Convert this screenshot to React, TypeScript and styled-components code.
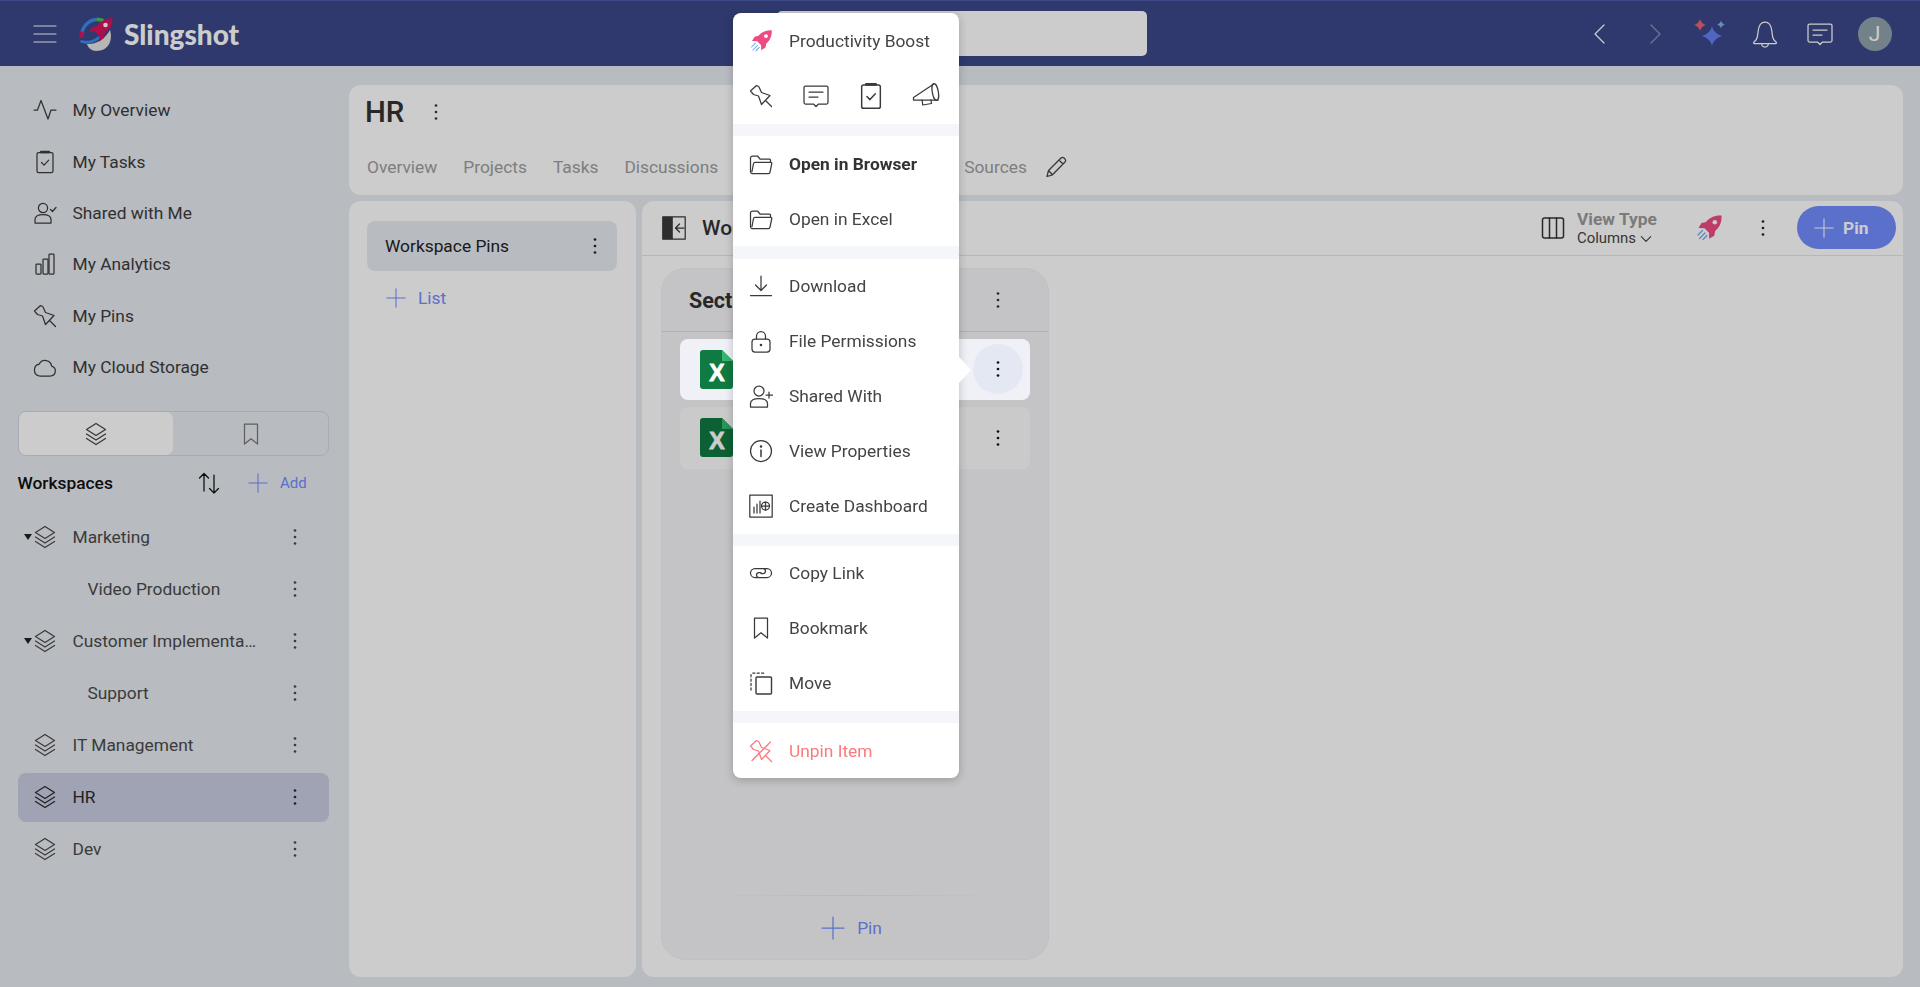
import React from "react";
import styled, { createGlobalStyle } from "styled-components";

const Global = createGlobalStyle`
  html, body { margin: 0; height: 100%; overflow: hidden; }
  body { font-family: Roboto, "Liberation Sans", sans-serif; color: #3a3a3a; background: #e7eaf1; }
  * { box-sizing: border-box; }
`;

const Glyph = styled.svg<{ $size?: number; $w?: number }>`
  width: ${(p) => p.$w ?? p.$size ?? 24}px;
  height: ${(p) => p.$size ?? 24}px;
  flex: none;
  fill: none;
  stroke: currentColor;
  stroke-width: 1.25;
  stroke-linecap: round;
  stroke-linejoin: round;
  display: block;
`;

type IP = { size?: number };
const I = ({ size = 24, w, vb = "0 0 24 24", children }: { size?: number; w?: number; vb?: string; children: React.ReactNode }) => (
  <Glyph $size={size} $w={w} viewBox={vb}>{children}</Glyph>
);

const PIN_D = "M1.500 7L7.500 1.500Q9 1.500 10 3L12.500 8.500 21 11.500 12.500 20.500 9.500 12 4.500 10.500ZM16.500 16.500L22.500 22.500";
const Burger = () => <I><path d="M1 4h22M1 12h22M1 20h22" strokeWidth="1" /></I>;
const Pulse = () => <I><path d="M1 12h3.500L8 2.500 15 21l3-9h5" /></I>;
const Clipboard = ({ size }: IP) => (
  <I size={size}>
    <rect x="4" y="2.500" width="16" height="20" rx="1.600" />
    <path d="M8 2h8" strokeWidth="2.400" />
    <path d="M8.500 12.500l2.600 2.600 4.600-5" />
  </I>
);
const SharedMe = () => <I><circle cx="10" cy="7" r="4.600" /><path d="M2 22v-3.500C2 15 5 13.500 10 13.500s8 1.500 8 5V22zM17.500 8.500l2 2 3.500-4" /></I>;
const Analytics = () => <I><rect x="3" y="12" width="5" height="10" rx=".8" /><rect x="10" y="7" width="5" height="15" rx=".8" /><rect x="16" y="2" width="5" height="20" rx=".8" /></I>;
const PinIcon = ({ size }: IP) => <I size={size}><path d={PIN_D} /></I>;
const Cloud = () => <I><path d="M6.500 21h11a5 5 0 0 0 1.200-9.800 6.600 6.600 0 0 0-12.500-2A6 6 0 0 0 6.500 21z" /></I>;
const Layers = () => <I><path d="M12 1.500l9.500 6-9.500 6-9.500-6zM2.500 12l9.500 6 9.500-6M2.500 16.500l9.500 6 9.500-6" /></I>;
const BookmarkIcon = () => <I><path d="M5.500 2h13v20l-6.500-5.200L5.500 22z" /></I>;
const Sort = () => <I><path d="M7 20V2.500M2.500 7L7 2.500 11.500 7M17 4v18M12.500 17.500L17 22l4.500-4.500" /></I>;
const Plus = ({ size = 20 }: IP) => <I size={size}><path d="M12 1v22M1 12h22" /></I>;
const DotsBox = styled.svg`width: 24px; height: 24px; flex: none; fill: currentColor; display: block;`;
const Dots = () => (
  <DotsBox viewBox="0 0 24 24"><circle cx="12" cy="5.500" r="1.350" /><circle cx="12" cy="12" r="1.350" /><circle cx="12" cy="18.500" r="1.350" /></DotsBox>
);
const Chat = ({ size = 28 }: IP) => <I size={size} vb="0 0 28 28"><path d="M3.500 4h21a1.500 1.500 0 0 1 1.500 1.500v15a1.500 1.500 0 0 1-1.500 1.500H16.500L14 24.500 11.500 22h-8A1.500 1.500 0 0 1 2 20.500v-15A1.500 1.500 0 0 1 3.500 4zM7 10h14M7 15h9" /></I>;
const Megaphone = () => <I size={28} vb="0 0 28 28"><path d="M21.800 2L1.500 15.500V18H26" /><ellipse cx="23.300" cy="10" rx="3" ry="8.500" transform="rotate(-10 23.300 10)" /><path d="M10 18l.8 5 8.700-1.500-.6-3.500" /></I>;
const Folder = () => <I><path d="M1.500 19.500V6a2 2 0 0 1 2-2h5l2.500 3h9.500a1 1 0 0 1 1 1v2M3 21.500h16.500a1.500 1.500 0 0 0 1.500-1.300l1.800-8.700a1 1 0 0 0-1-1.200H6a1.500 1.500 0 0 0-1.500 1.200L3 19.500" /><path d="M1.500 19.500A2 2 0 0 0 3 21.500" /></I>;
const Download = () => <I><path d="M12 2v14M6.500 11l5.500 5.500 5.500-5.500M1.500 21.500h21" /></I>;
const Lock = () => <I><rect x="3" y="10" width="18" height="13" rx="3" /><path d="M7.500 10V7a4.500 4.500 0 0 1 9 0v3" /><circle cx="12" cy="16" r=".7" fill="currentColor" /></I>;
const UserPlus = () => <I><circle cx="10" cy="7" r="5" /><path d="M1.500 23v-3.500C1.500 16 5 14.500 10 14.500s8.500 1.500 8.500 5V23zM20 8v6M17 11h6.500" /></I>;
const Info = () => <I><circle cx="12" cy="12" r="10.500" /><path d="M12 11v6.500" strokeWidth="1.500" /><circle cx="12" cy="7.500" r=".7" fill="currentColor" /></I>;
const CreateDash = () => <I><rect x=".8" y="1" width="22.400" height="22" /><path d="M5 13v6M8 10v9M11 7v12" /><circle cx="16.500" cy="12" r="4" /><path d="M16.500 8v8M12.500 12h8" /></I>;
const LinkIcon = () => <I><path d="M10 16.500H6a4.500 4.500 0 0 1 0-9h8a2.500 2.500 0 0 1 0 5h-2M14 7.500h4a4.500 4.500 0 0 1 0 9h-8a2.500 2.500 0 0 1 0-5h2" /></I>;
const Move = () => <I><path d="M2 19V4a2 2 0 0 1 2-2h11" strokeDasharray="2.200 2.200" /><rect x="7" y="6" width="15.500" height="17" rx="1" strokeWidth="1.400" /></I>;
const Unpin = () => <I><path d={PIN_D} /><path d="M3 21.500L21.500 3" /></I>;
const Rocket = ({ size = 24 }: IP) => (
  <Glyph $size={size} viewBox="0 0 28 28" style={{ stroke: "none" }}>
    <path fill="#ed4b82" d="M26.500 1.500C20 1 14.500 3.500 11 8L6.500 9 3.500 14l6 .2 4.500 4.500.2 6 5-3 1-4.700C24.500 13.500 27 8 26.500 1.500z" />
    <circle cx="19.800" cy="8.300" r="2.300" fill="#fff" />
    <path stroke="#6ea6f2" strokeWidth="1.200" strokeLinecap="round" d="M7.500 16.500L3 21M10 19l-5.500 5.500M12 21.500l-4 4" />
  </Glyph>
);
const Back = () => <I><path d="M16 3L7 12l9 9" /></I>;
const Forward = () => <I><path d="M8 3l9 9-9 9" /></I>;
const Bell = () => <I size={30} vb="0 0 30 30"><path d="M4 23c2.500-1.500 3-3 3.500-6l.8-6C9 6 11.500 3 15 3s6 3 6.700 8l.8 6c.5 3 1 4.500 3.500 6 .8.600.4 1.500-.5 1.500H4.500C3.600 24.500 3.200 23.600 4 23zM11.500 24.500c.3 2.200 1.700 3.500 3.500 3.500s3.200-1.300 3.500-3.500" /></I>;
const Sparkles = () => (
  <Glyph $size={34} viewBox="0 0 34 34" style={{ stroke: "none" }}>
    <path fill="#6480f0" d="M19 9c1 5 5 8.500 10 10-5 1.500-9 5-10 10-1-5-5-8.500-10-10 5-1.500 9-5 10-10z" />
    <path fill="#ed6170" d="M7 2c.6 3 3 5.200 6 6-3 .8-5.400 3-6 6-.6-3-3-5.200-6-6 3-.8 5.400-3 6-6z" />
    <path fill="#7fb3ea" d="M28 3.500c.4 2 2 3.500 4 4-2 .5-3.600 2-4 4-.4-2-2-3.500-4-4 2-.5 3.600-2 4-4z" />
  </Glyph>
);
const Logo = () => (
  <Glyph $size={34} viewBox="0 0 34 34" style={{ strokeLinecap: "butt" }}>
    <path stroke="none" fill="#e4e4e4" d="M8 27c9 1 18-5 23-14 3 10-1 21-14 21-4 0-8-3-9-7z" />
    <path stroke="#3d8bf0" strokeWidth="3.400" d="M2.500 21C1.800 11 9 3 17.500 2.500" />
    <path stroke="#49c35b" strokeWidth="3.400" d="M17.500 2.500c2.500-.2 5 .2 7 1.200" />
    <path stroke="#d6155d" strokeWidth="3.400" d="M2.300 14.500l.1 6.500" />
    <path stroke="#3d8bf0" strokeWidth="3" d="M1.500 24c6 2.800 14 1 19-4" />
    <path stroke="none" fill="#d6155d" d="M33.500 1C27 1.500 22 3.500 18 9l-5 1.500-3 4.500 6-.5 4 4 .2 6 4.800-3.500 1-5C31 12 33.800 8 33.500 1z" />
    <circle stroke="none" cx="26.500" cy="8" r="2.300" fill="#fff" />
  </Glyph>
);
const ColumnsIcon = () => <I><rect x="1.500" y="2" width="21" height="20" rx="2" strokeWidth="1.500" /><path d="M8.500 2v20M15.500 2v20" strokeWidth="1.500" /></I>;
const Caret = () => <I size={14}><path d="M4 8l8 8 8-8" strokeWidth="2" /></I>;
const Pencil = () => <I><path d="M3 21.500l1.500-6L17 3a2.200 2.200 0 0 1 3 0l1 1a2.200 2.200 0 0 1 0 3L8.500 19.800zM4.500 15.500l4 4.300M15 5l4 4" /></I>;
const PanelToggle = () => (
  <Glyph $size={24} viewBox="0 0 24 24">
    <rect x=".8" y=".8" width="22.400" height="22.400" />
    <rect x=".8" y=".8" width="10" height="22.400" fill="currentColor" stroke="none" />
    <path d="M22 12H14M17.500 8L13.500 12l4 4" />
  </Glyph>
);
const ExcelBox = styled.svg`width: 33px; height: 39px; flex: none; display: block;`;
const Excel = () => (
  <ExcelBox viewBox="0 0 33 39">
    <path fill="#0f7a41" d="M3 0h19l11 11v25a3 3 0 0 1-3 3H3a3 3 0 0 1-3-3V3a3 3 0 0 1 3-3z" />
    <path fill="#35b86e" d="M22 0l11 11H22z" />
    <text x="17" y="31" textAnchor="middle" fontFamily="Liberation Sans, sans-serif" fontWeight="700" fontSize="23" stroke="#fff" strokeWidth=".8" fill="#fff">X</text>
  </ExcelBox>
);

/* ---------- shell ---------- */
const Page = styled.div`
  position: relative;
  height: 100vh;
  display: grid;
  grid-template-rows: 66px 1fr;
  overflow: hidden;
`;
const Backdrop = styled.div`
  position: fixed;
  inset: 0;
  background: rgba(0, 0, 0, 0.2);
  z-index: 10;
`;
const Header = styled.header`
  background: #3b4889;
  border-top: 1px solid #4c5ca8;
  color: #fff;
  display: flex;
  align-items: center;
  padding-left: 33px;
  padding-right: 18px;
`;
const Wordmark = styled.span`
  font-family: Lato, Roboto, sans-serif;
  font-weight: 900;
  font-size: 28px;
  margin-left: 11px;
  width: 118px;
`;
const LogoSlot = styled.span`margin-left: 22px;`;
const Search = styled.div`
  width: 370px;
  height: 45px;
  margin-left: 535px;
  background: #fff;
  border-radius: 5px;
`;
const HeadRight = styled.div`
  margin-left: auto;
  display: grid;
  grid-template-columns: repeat(6, 55px);
  justify-items: center;
  align-items: center;
`;
const Dim = styled.span`opacity: 0.4; display: block;`;
const Avatar = styled.div`
  width: 34px;
  height: 34px;
  border-radius: 50%;
  background: #90a3aa;
  color: #fff;
  display: flex;
  align-items: center;
  justify-content: center;
  font-size: 21px;
`;
const Body = styled.div`
  display: grid;
  grid-template-columns: 349px 1fr;
  min-height: 0;
`;

/* ---------- sidebar ---------- */
const Side = styled.aside`
  padding-top: 18.500px;
  display: flex;
  flex-direction: column;
`;
const NavRow = styled.div`
  height: 51.400px;
  padding-left: 33px;
  display: flex;
  align-items: center;
  gap: 15.500px;
  font-size: 17.350px;
  color: #3d3d3d;
`;
const Toggle = styled.div`
  margin: 18.500px 20px 0 17.500px;
  height: 45px;
  display: grid;
  grid-template-columns: 1fr 1fr;
  border: 1px solid #d3d6de;
  border-radius: 8px;
`;
const ToggleCell = styled.div<{ $on?: boolean }>`
  display: flex;
  align-items: center;
  justify-content: center;
  border-radius: 7px;
  background: ${(p) => (p.$on ? "#fff" : "transparent")};
  color: ${(p) => (p.$on ? "#444" : "#777")};
`;
const WsHead = styled.div`
  height: 54px;
  padding: 0 0 0 17.500px;
  display: flex;
  align-items: center;
  font-size: 17.350px;
  font-weight: 500;
  color: #111;
`;
const WsTitle = styled.span`width: 179.500px;`;
const AddBtn = styled.span`
  margin-left: 27px;
  display: flex;
  align-items: center;
  gap: 12px;
  color: #728cfe;
  font-size: 15px;
  font-weight: 400;
`;
const Tree = styled.div`
  margin: 2px 20px 0 17.500px;
  display: flex;
  flex-direction: column;
  gap: 3.100px;
`;
const TreeRow = styled.div<{ $on?: boolean }>`
  height: 49px;
  padding: 0 22.500px 0 5.500px;
  display: flex;
  align-items: center;
  border-radius: 8px;
  font-size: 17.350px;
  color: ${(p) => (p.$on ? "#2a2a2a" : "#4a4a4a")};
  background: ${(p) => (p.$on ? "#c8cce1" : "transparent")};
`;
const CaretSlot = styled.span`width: 10px; flex: none; display: flex; justify-content: center; color: #222;`;
const CaretTri = styled.span`
  width: 0;
  height: 0;
  border-left: 4.500px solid transparent;
  border-right: 4.500px solid transparent;
  border-top: 6px solid currentColor;
`;
const TreeLabel = styled.span<{ $sub?: boolean }>`
  flex: 1;
  min-width: 0;
  margin-left: ${(p) => (p.$sub ? "30.500px" : "15.500px")};
  margin-right: 24px;
  white-space: nowrap;
  overflow: hidden;
  text-overflow: ellipsis;
`;
const IconSpacer = styled.span`width: 24px; flex: none;`;

/* ---------- content ---------- */
const Content = styled.main`
  padding: 19px 17px 10px 0;
  display: grid;
  grid-template-rows: 110px 1fr;
  gap: 6px;
  min-height: 0;
`;
const TopCard = styled.section`
  background: #fff;
  border-radius: 12px;
  padding: 0 16px;
`;
const TitleRow = styled.div`
  height: 54px;
  display: flex;
  align-items: center;
  gap: 20px;
`;
const Title = styled.h1`
  margin: 0;
  font-size: 29.400px;
  font-weight: 500;
  color: #333;
`;
const Tabs = styled.nav`
  margin: 13px 0 0 2px;
  height: 30px;
  display: flex;
  align-items: center;
  gap: 26px;
  font-size: 17.350px;
  color: #9e9e9e;
`;
const Tab = styled.span<{ $skip?: number }>`
  margin-left: ${(p) => p.$skip ?? 0}px;
`;
const PencilSlot = styled.span`color: #444; margin-left: -9px;`;
const Panels = styled.div`
  display: grid;
  grid-template-columns: 287px 1fr;
  gap: 6px;
  min-height: 0;
`;
const ListPanel = styled.section`
  background: #fff;
  border-radius: 12px;
  padding: 20px 19px 0 18px;
`;
const ListItem = styled.div`
  height: 50px;
  padding: 0 10px 0 18px;
  background: #e7eaf1;
  border-radius: 8px;
  display: flex;
  align-items: center;
  justify-content: space-between;
  font-size: 17.350px;
  color: #222;
`;
const AddList = styled.div`
  height: 54px;
  padding-left: 19px;
  display: flex;
  align-items: center;
  gap: 12px;
  font-size: 17.350px;
  color: #728cfe;
`;
const MainPanel = styled.section`
  background: #fff;
  border-radius: 12px;
  display: flex;
  flex-direction: column;
  min-height: 0;
`;
const PanelHead = styled.div`
  height: 54.500px;
  flex: none;
  padding: 0 7px 0 20px;
  display: flex;
  align-items: center;
  border-bottom: 1px solid #e4e5e7;
`;
const PanelTitle = styled.span`
  margin-left: 16px;
  font-size: 21px;
  font-weight: 500;
  color: #333;
`;
const ViewGroup = styled.div`
  margin-left: auto;
  display: flex;
  align-items: center;
  gap: 12px;
  color: #333;
`;
const ViewStack = styled.div`
  display: flex;
  flex-direction: column;
  width: 86px;
  padding-top: 2px;
  line-height: 1.2;
`;
const ViewTitle = styled.span`
  font-size: 17.350px;
  font-weight: 700;
  color: #9a9a9a;
`;
const ViewValue = styled.span`
  font-size: 14.900px;
  color: #444;
  display: flex;
  align-items: center;
  gap: 3px;
`;
const RocketSlot = styled.span`margin-left: 32px;`;
const DotsSlot = styled.span`margin-left: 28px; color: #222;`;
const PinBtn = styled.button`
  margin-left: 22px;
  width: 99px;
  height: 43px;
  padding: 0 0 0 17px;
  border: 0;
  border-radius: 22px;
  background: #728cfe;
  color: #fff;
  font: 700 17.350px Roboto, sans-serif;
  display: flex;
  align-items: center;
  gap: 9px;
`;
const ColumnArea = styled.div`
  flex: 1;
  padding: 12.500px 0 17px 19px;
  min-height: 0;
  display: flex;
`;
const SectionCol = styled.div`
  width: 388px;
  background: #f5f6f9;
  border-radius: 24px;
  border: 1px solid #f0f1f4;
  display: flex;
  flex-direction: column;
`;
const SectionHead = styled.div`
  height: 63px;
  flex: none;
  padding: 0 38px 0 27px;
  display: flex;
  align-items: center;
  justify-content: space-between;
  border-bottom: 1px solid #dcdde0;
  font-size: 21.500px;
  font-weight: 700;
  color: #333;
`;
const PinList = styled.div`
  flex: 1;
  padding: 6.500px 18px 0;
  display: flex;
  flex-direction: column;
  gap: 7px;
`;
const PinCard = styled.div<{ $on?: boolean }>`
  height: ${(p) => (p.$on ? 61 : 62)}px;
  padding: 0 7px 0 20px;
  border-radius: 8px;
  display: flex;
  align-items: center;
  justify-content: space-between;
  background: ${(p) => (p.$on ? "#f0f1f7" : "#fdfdfe")};
  position: ${(p) => (p.$on ? "relative" : "static")};
  z-index: ${(p) => (p.$on ? 11 : "auto")};
`;
const RoundBtn = styled.span<{ $on?: boolean }>`
  width: 50px;
  height: 50px;
  border-radius: 50%;
  display: flex;
  align-items: center;
  justify-content: center;
  color: #111;
  background: ${(p) => (p.$on ? "#e4e8f3" : "transparent")};
`;
const SectionFoot = styled.div`
  height: 64px;
  flex: none;
  padding-right: 7px;
  display: flex;
  align-items: center;
  justify-content: center;
  gap: 12px;
  font-size: 17.350px;
  color: #728cfe;
  border-top: 1px solid;
  border-image: linear-gradient(90deg, transparent 10%, #e6e7ea 50%, transparent 90%) 1;
`;

/* ---------- popup ---------- */
const Menu = styled.div`
  position: absolute;
  left: 733px;
  top: 13px;
  width: 226px;
  background: #fff;
  border-radius: 8px;
  box-shadow: 0 2px 10px rgba(0, 0, 0, 0.22);
  z-index: 12;
  &::after {
    content: "";
    position: absolute;
    left: 100%;
    top: 344px;
    border-left: 12px solid #fff;
    border-top: 13px solid transparent;
    border-bottom: 13px solid transparent;
  }
`;
const MenuRow = styled.div<{ $bold?: boolean; $danger?: boolean }>`
  height: 55px;
  display: flex;
  align-items: center;
  font-size: 17.350px;
  font-weight: ${(p) => (p.$bold ? 700 : 400)};
  color: ${(p) => (p.$danger ? "#fb7a7c" : p.$bold ? "#333" : "#444")};
`;
const MenuIcon = styled.span<{ $danger?: boolean }>`
  width: 56px;
  flex: none;
  display: flex;
  justify-content: center;
  color: ${(p) => (p.$danger ? "#fb7a7c" : "#3a3a3a")};
`;
const IconRow = styled.div`
  height: 56px;
  display: grid;
  grid-template-columns: repeat(4, 55px);
  justify-items: center;
  align-items: center;
  color: #3a3a3a;
`;
const MenuSep = styled.div`
  height: 12.250px;
  background: #f4f6fa;
`;

const tree = [
  { name: "Marketing", caret: true },
  { name: "Video Production", sub: true },
  { name: "Customer Implementation", caret: true },
  { name: "Support", sub: true },
  { name: "IT Management" },
  { name: "HR", on: true },
  { name: "Dev" },
];
const nav: [React.ReactNode, string][] = [
  [<Pulse />, "My Overview"],
  [<Clipboard />, "My Tasks"],
  [<SharedMe />, "Shared with Me"],
  [<Analytics />, "My Analytics"],
  [<PinIcon />, "My Pins"],
  [<Cloud />, "My Cloud Storage"],
];
type Item = { icon: React.ReactNode; label: string; bold?: boolean; danger?: boolean };
const groups: Item[][] = [
  [
    { icon: <Folder />, label: "Open in Browser", bold: true },
    { icon: <Folder />, label: "Open in Excel" },
  ],
  [
    { icon: <Download />, label: "Download" },
    { icon: <Lock />, label: "File Permissions" },
    { icon: <UserPlus />, label: "Shared With" },
    { icon: <Info />, label: "View Properties" },
    { icon: <CreateDash />, label: "Create Dashboard" },
  ],
  [
    { icon: <LinkIcon />, label: "Copy Link" },
    { icon: <BookmarkIcon />, label: "Bookmark" },
    { icon: <Move />, label: "Move" },
  ],
  [{ icon: <Unpin />, label: "Unpin Item", danger: true }],
];

export default function App() {
  return (
    <Page>
      <Global />
      <Header>
        <Burger />
        <LogoSlot><Logo /></LogoSlot>
        <Wordmark>Slingshot</Wordmark>
        <Search />
        <HeadRight>
          <Back />
          <Dim><Forward /></Dim>
          <Sparkles />
          <Bell />
          <Chat />
          <Avatar>J</Avatar>
        </HeadRight>
      </Header>
      <Body>
        <Side>
          {nav.map(([icon, label]) => (
            <NavRow key={label}>{icon}{label}</NavRow>
          ))}
          <Toggle>
            <ToggleCell $on><Layers /></ToggleCell>
            <ToggleCell><BookmarkIcon /></ToggleCell>
          </Toggle>
          <WsHead>
            <WsTitle>Workspaces</WsTitle>
            <Sort />
            <AddBtn><Plus />Add</AddBtn>
          </WsHead>
          <Tree>
            {tree.map((t) => (
              <TreeRow key={t.name} $on={t.on}>
                <CaretSlot>{t.caret && <CaretTri />}</CaretSlot>
                {t.sub ? <IconSpacer /> : <Layers />}
                <TreeLabel $sub={t.sub}>{t.name}</TreeLabel>
                <Dots />
              </TreeRow>
            ))}
          </Tree>
        </Side>
        <Content>
          <TopCard>
            <TitleRow>
              <Title>HR</Title>
              <Dots />
            </TitleRow>
            <Tabs>
              <Tab>Overview</Tab>
              <Tab>Projects</Tab>
              <Tab>Tasks</Tab>
              <Tab>Discussions</Tab>
              <Tab $skip={220}>Sources</Tab>
              <PencilSlot><Pencil /></PencilSlot>
            </Tabs>
          </TopCard>
          <Panels>
            <ListPanel>
              <ListItem>Workspace Pins<Dots /></ListItem>
              <AddList><Plus />List</AddList>
            </ListPanel>
            <MainPanel>
              <PanelHead>
                <PanelToggle />
                <PanelTitle>Workspace Pins</PanelTitle>
                <ViewGroup>
                  <ColumnsIcon />
                  <ViewStack>
                    <ViewTitle>View Type</ViewTitle>
                    <ViewValue>Columns<Caret /></ViewValue>
                  </ViewStack>
                </ViewGroup>
                <RocketSlot><Rocket size={28} /></RocketSlot>
                <DotsSlot><Dots /></DotsSlot>
                <PinBtn><Plus />Pin</PinBtn>
              </PanelHead>
              <ColumnArea>
                <SectionCol>
                  <SectionHead>Section<Dots /></SectionHead>
                  <PinList>
                    <PinCard $on><Excel /><RoundBtn $on><Dots /></RoundBtn></PinCard>
                    <PinCard><Excel /><RoundBtn><Dots /></RoundBtn></PinCard>
                  </PinList>
                  <SectionFoot><Plus size={24} />Pin</SectionFoot>
                </SectionCol>
              </ColumnArea>
            </MainPanel>
          </Panels>
        </Content>
      </Body>
      <Backdrop />
      <Menu>
        <MenuRow><MenuIcon><Rocket /></MenuIcon>Productivity Boost</MenuRow>
        <IconRow>
          <PinIcon />
          <Chat />
          <Clipboard size={28} />
          <Megaphone />
        </IconRow>
        {groups.map((g, i) => (
          <React.Fragment key={i}>
            <MenuSep />
            {g.map((it) => (
              <MenuRow key={it.label} $bold={it.bold} $danger={it.danger}>
                <MenuIcon $danger={it.danger}>{it.icon}</MenuIcon>
                {it.label}
              </MenuRow>
            ))}
          </React.Fragment>
        ))}
      </Menu>
    </Page>
  );
}
